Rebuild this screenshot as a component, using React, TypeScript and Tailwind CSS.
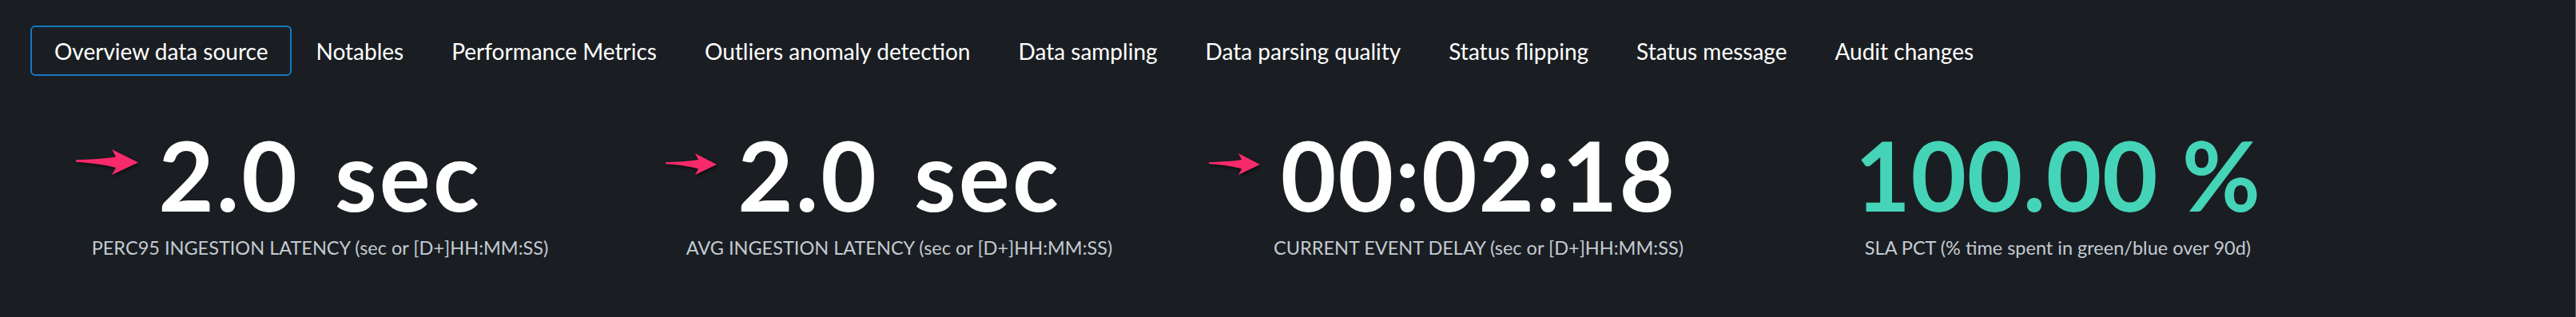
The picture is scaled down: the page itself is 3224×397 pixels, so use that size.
import * as React from "react";

const TABS = [
  "Overview data source",
  "Notables",
  "Performance Metrics",
  "Outliers anomaly detection",
  "Data sampling",
  "Data parsing quality",
  "Status flipping",
  "Status message",
  "Audit changes",
];

type Metric = {
  value: string;
  label: string;
  valueClass: string;
  arrow?: "lg" | "sm";
};

const METRICS: Metric[] = [
  {
    value: "2.0 sec",
    label: "PERC95 INGESTION LATENCY (sec or [D+]HH:MM:SS)",
    valueClass: "text-white tracking-[3px] [word-spacing:12px]",
    arrow: "lg",
  },
  {
    value: "2.0 sec",
    label: "AVG INGESTION LATENCY (sec or [D+]HH:MM:SS)",
    valueClass: "text-white tracking-[3px] [word-spacing:12px]",
    arrow: "sm",
  },
  {
    value: "00:02:18",
    label: "CURRENT EVENT DELAY (sec or [D+]HH:MM:SS)",
    valueClass: "text-white tracking-[2px]",
    arrow: "sm",
  },
  {
    value: "100.00 %",
    label: "SLA PCT (% time spent in green/blue over 90d)",
    valueClass: "text-[#45d4b8] tracking-[0.5px]",
  },
];

function PinkArrow({ size }: { size: "lg" | "sm" }) {
  return (
    <svg
      viewBox="0 0 78 32"
      className={
        size === "lg"
          ? "absolute right-[calc(100%+25px)] top-[28px] h-[32px] w-[78px] drop-shadow-[1px_2px_2px_rgba(0,0,0,0.6)]"
          : "absolute right-[calc(100%+26px)] top-[33px] h-[27px] w-[64px] drop-shadow-[1px_2px_2px_rgba(0,0,0,0.6)]"
      }
      preserveAspectRatio="none"
    >
      <path
        d="M0 13.2 C18 12.6 36 12 50 9.5 L45 0 L78 16.5 L45 32 L50 23 C37 19.5 19 17 0 15.8 Z"
        fill="#f72a6b"
      />
    </svg>
  );
}

export default function App() {
  return (
    <div className="h-[397px] w-[3224px] border-r border-[#5a5f66] bg-[#1a1e22] font-['Lato','Liberation_Sans',sans-serif] text-white">
      <div className="flex pl-[38px] pt-[32px]">
        {TABS.map((t, i) => (
          <div
            key={t}
            className={
              i === 0
                ? "flex h-[63px] items-center rounded-[6px] border-2 border-[#1478c2] px-[28px] text-[28px]"
                : "flex h-[63px] items-center rounded-[6px] border-2 border-transparent px-[28px] text-[28px]"
            }
          >
            {t}
          </div>
        ))}
      </div>

      <div className="ml-[38px] mt-[64px] grid w-[2900px] grid-cols-4">
        {METRICS.map((m) => (
          <div key={m.label} className="flex flex-col items-center">
            <div className="relative">
              {m.arrow && <PinkArrow size={m.arrow} />}
              <span className={"block whitespace-pre text-[120px] font-bold leading-[120px] " + m.valueClass}>
                {m.value}
              </span>
            </div>
            <div className="mt-[14px] text-[23.5px] text-[#c3cad3]">{m.label}</div>
          </div>
        ))}
      </div>
    </div>
  );
}
